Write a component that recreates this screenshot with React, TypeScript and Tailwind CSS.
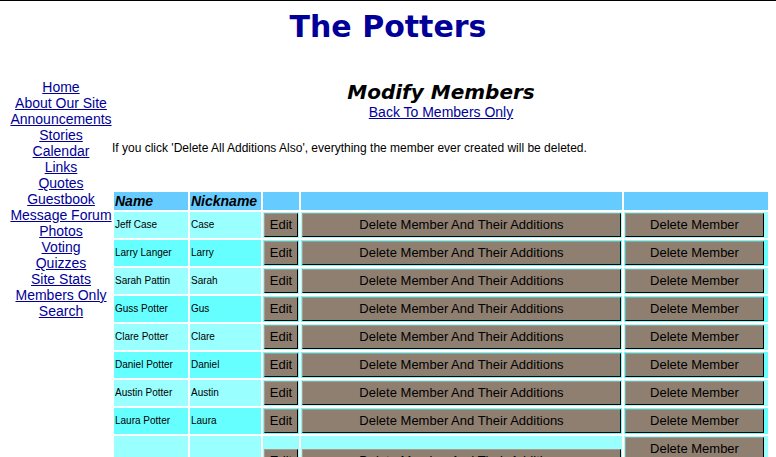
import React from "react";

const links = [
  "Home",
  "About Our Site",
  "Announcements",
  "Stories",
  "Calendar",
  "Links",
  "Quotes",
  "Guestbook",
  "Message Forum",
  "Photos",
  "Voting",
  "Quizzes",
  "Site Stats",
  "Members Only",
  "Search",
];

const members = [
  { name: "Jeff Case", nickname: "Case" },
  { name: "Larry Langer", nickname: "Larry" },
  { name: "Sarah Pattin", nickname: "Sarah" },
  { name: "Guss Potter", nickname: "Gus" },
  { name: "Clare Potter", nickname: "Clare" },
  { name: "Daniel Potter", nickname: "Daniel" },
  { name: "Austin Potter", nickname: "Austin" },
  { name: "Laura Potter", nickname: "Laura" },
];

function BevelButton({ children, width = "w-full" }: { children: string; width?: string }) {
  return (
    <button
      type="button"
      className={`block h-6 ${width} whitespace-nowrap border border-t-[#a89c90] border-l-[#a89c90] border-r-black border-b-black bg-[#8f7f70] text-center text-[13px] leading-5 text-black`}
    >
      {children}
    </button>
  );
}

export default function App() {
  return (
    <div className="h-screen overflow-hidden border-t border-black bg-white font-['Liberation_Sans',Arial,sans-serif] text-black">
      <header className="pt-[5px]">
        <h1 className="text-center font-['DejaVu_Sans',Verdana,sans-serif] text-[30px] leading-[42px] font-bold text-[#000099]">
          The Potters
        </h1>
      </header>
      <div className="flex pt-[31px] pr-1.5 pl-2.5">
        <nav className="w-[102px] shrink-0 text-center text-[14px] leading-4 text-[#000099]">
          <ul>
            {links.map((label) => (
              <li key={label}>
                <a href="#" className="whitespace-nowrap underline">
                  {label}
                </a>
              </li>
            ))}
          </ul>
        </nav>
        <main className="min-w-0 flex-1">
          <h2 className="pt-px text-center font-['DejaVu_Sans',Verdana,sans-serif] text-[20px] leading-6 font-bold italic">
            Modify Members
          </h2>
          <div className="text-center text-[14px] leading-4">
            <a href="#" className="text-[#000099] underline">
              Back To Members Only
            </a>
          </div>
          <p className="mt-5 text-[12px] leading-4">
            If you click &apos;Delete All Additions Also&apos;, everything the member ever created will be deleted.
          </p>
          <table className="mt-[34px] w-full table-fixed border-separate border-spacing-[2px]">
            <colgroup>
              <col className="w-[74px]" />
              <col className="w-[71px]" />
              <col className="w-[36px]" />
              <col />
              <col className="w-[144px]" />
            </colgroup>
            <thead>
              <tr className="h-[18px] bg-[#66ccff] text-left text-[14px] leading-4 italic">
                <th className="p-px">Name</th>
                <th className="p-px">Nickname</th>
                <th className="p-px" />
                <th className="p-px" />
                <th className="p-px" />
              </tr>
            </thead>
            <tbody className="text-[10px] leading-3">
              {members.map((member) => (
                <tr key={member.name} className="odd:bg-[#99ffff] even:bg-[#66ffff]">
                  <td className="p-px whitespace-nowrap">{member.name}</td>
                  <td className="p-px whitespace-nowrap">{member.nickname}</td>
                  <td className="p-px">
                    <BevelButton>Edit</BevelButton>
                  </td>
                  <td className="p-px">
                    <BevelButton>Delete Member And Their Additions</BevelButton>
                  </td>
                  <td className="p-px">
                    <BevelButton width="w-[139px]">Delete Member</BevelButton>
                  </td>
                </tr>
              ))}
              <tr className="h-[50px] bg-[#99ffff]">
                <td className="p-px" />
                <td className="p-px" />
                <td className="p-px">
                  <BevelButton>Edit</BevelButton>
                </td>
                <td className="p-px">
                  <BevelButton>Delete Member And Their Additions</BevelButton>
                </td>
                <td className="p-px align-top">
                  <BevelButton width="w-[139px]">Delete Member</BevelButton>
                </td>
              </tr>
            </tbody>
          </table>
        </main>
      </div>
    </div>
  );
}
